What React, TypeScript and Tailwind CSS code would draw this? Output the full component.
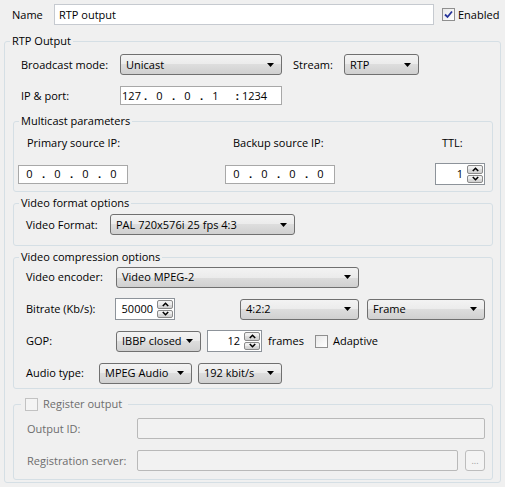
import React from 'react';

const comboBg = 'bg-[linear-gradient(#f3f3f3,#ebebeb_50%,#dddddd_50%,#d0d0d0)]';

function Arrow() {
  return (
    <svg width="7" height="4" viewBox="0 0 7 4" className="shrink-0">
      <path d="M0 0 L7 0 L3.5 4 Z" fill="#000" />
    </svg>
  );
}

function Combo({ w, children }: { w: string; children: React.ReactNode }) {
  return (
    <div className={`${w} h-[21px] shrink-0 flex items-center justify-between pl-[5px] pr-[7px] border border-[#707070] rounded-[3px] ${comboBg}`}>
      <span className="whitespace-nowrap">{children}</span>
      <Arrow />
    </div>
  );
}

function SpinBtn({ up }: { up?: boolean }) {
  return (
    <div className={`flex-1 flex items-center justify-center border border-[#8a8a8a] rounded-[2px] ${comboBg}`}>
      <svg width="7" height="5" viewBox="0 0 7 5">
        <path d={up ? 'M0.8 4 L3.5 1.3 L6.2 4' : 'M0.8 1 L3.5 3.7 L6.2 1'} stroke="#000" strokeWidth="1.6" fill="none" />
      </svg>
    </div>
  );
}

function Spin({ w, value }: { w: string; value: string }) {
  return (
    <div className={`${w} h-[22px] shrink-0 flex border border-[#8d939a] bg-white`}>
      <div className="flex-1 flex items-center justify-end pr-[3px]">{value}</div>
      <div className="w-[18px] flex flex-col gap-[1px] p-[1px]">
        <SpinBtn up />
        <SpinBtn />
      </div>
    </div>
  );
}

function Ip({ parts, port }: { parts: string[]; port?: string }) {
  return (
    <div className="w-full h-[19px] flex items-center border border-[#a8a8a8] bg-white">
      {parts.map((p, i) => (
        <React.Fragment key={i}>
          <span className="w-[21px] text-center">{p}</span>
          {i < 3 && <span className="w-[7px] text-center font-bold">.</span>}
        </React.Fragment>
      ))}
      {port && (
        <>
          <span className="w-[13px] text-right font-bold">:</span>
          <span className="pl-[3px]">{port}</span>
        </>
      )}
    </div>
  );
}

function Check({ checked, disabled }: { checked?: boolean; disabled?: boolean }) {
  return (
    <div
      className={`w-[13px] h-[13px] shrink-0 flex items-center justify-center border ${
        disabled ? 'border-[#c2c2c2] bg-[#f4f4f4]' : 'border-[#8f8f8f] bg-[linear-gradient(135deg,#e8e8e8,#ffffff)]'
      }`}
    >
      {checked && (
        <svg width="9" height="9" viewBox="0 0 9 9">
          <path d="M1 4.5 L3.5 7 L8 1.5" stroke="#26349a" strokeWidth="1.8" fill="none" />
        </svg>
      )}
    </div>
  );
}

export default function App() {
  return (
    <div className="w-[505px] h-[487px] overflow-hidden bg-[#f0f0f0] text-black text-[11px] leading-[16px] font-['Open_Sans',sans-serif]">
      {/* Name row */}
      <div className="flex items-center pt-[4px] pl-[12px]">
        <span className="w-[42px]">Name</span>
        <div className="w-[380px] h-[21px] flex items-center pl-[4px] border border-[#c6cad0] bg-white">RTP output</div>
        <div className="ml-[8px]">
          <Check checked />
        </div>
        <span className="ml-[3px]">Enabled</span>
      </div>

      <fieldset className="mt-[8px] mx-[4px] border border-[#d5dfe5] rounded-[3px]">
        <legend className="ml-[5px] px-[2px]">RTP Output</legend>

        <div className="pt-[5px] pl-[16px]">
          <div className="flex items-center h-[21px]">
            <span className="w-[99px]">Broadcast mode:</span>
            <Combo w="w-[162px]">Unicast</Combo>
            <span className="ml-[11px] w-[51px]">Stream:</span>
            <Combo w="w-[75px]">RTP</Combo>
          </div>
          <div className="flex items-center h-[19px] mt-[11px]">
            <span className="w-[99px]">IP &amp; port:</span>
            <div className="w-[162px]">
              <Ip parts={['127', '0', '0', '1']} port="1234" />
            </div>
          </div>
        </div>

        <div className="pl-[8px] pr-[7px] pb-[2px]">
          {/* Multicast parameters */}
          <fieldset className="mt-[8px] border border-[#d5dfe5] rounded-[3px]">
            <legend className="ml-[5px] px-[2px]">Multicast parameters</legend>
            <div className="flex pt-[6px] pl-[4px] pb-[6px]">
              <div className="w-[207px]">
                <div className="pl-[9px]">Primary source IP:</div>
                <div className="mt-[12px] h-[22px] flex items-center w-[110px]">
                  <Ip parts={['0', '0', '0', '0']} />
                </div>
              </div>
              <div className="w-[210px]">
                <div className="pl-[8px]">Backup source IP:</div>
                <div className="mt-[12px] h-[22px] flex items-center w-[110px]">
                  <Ip parts={['0', '0', '0', '0']} />
                </div>
              </div>
              <div>
                <div className="pl-[7px]">TTL:</div>
                <div className="mt-[12px]">
                  <Spin w="w-[50px]" value="1" />
                </div>
              </div>
            </div>
          </fieldset>

          {/* Video format */}
          <fieldset className="mt-[3px] border border-[#d5dfe5] rounded-[3px]">
            <legend className="ml-[5px] px-[2px]">Video format options</legend>
            <div className="pt-[3px] pl-[12px] pb-[10px]">
              <div className="flex items-center h-[21px]">
                <span className="w-[84px]">Video Format:</span>
                <Combo w="w-[185px]">PAL 720x576i 25 fps 4:3</Combo>
              </div>
            </div>
          </fieldset>

          {/* Video compression */}
          <fieldset className="mt-[3px] border border-[#d5dfe5] rounded-[3px]">
            <legend className="ml-[5px] px-[2px]">Video compression options</legend>
            <div className="pt-[1px] pl-[12px] pb-[4px] flex flex-col gap-[10px]">
              <div className="flex items-center h-[22px]">
                <span className="w-[90px]">Video encoder:</span>
                <Combo w="w-[243px]">Video MPEG-2</Combo>
              </div>
              <div className="flex items-center h-[22px]">
                <span className="w-[89px]">Bitrate (Kb/s):</span>
                <Spin w="w-[60px]" value="50000" />
                <div className="ml-[65px]">
                  <Combo w="w-[119px]">4:2:2</Combo>
                </div>
                <div className="ml-[8px]">
                  <Combo w="w-[118px]">Frame</Combo>
                </div>
              </div>
              <div className="flex items-center h-[22px]">
                <span className="w-[90px]">GOP:</span>
                <Combo w="w-[85px]">IBBP closed</Combo>
                <div className="ml-[6px]">
                  <Spin w="w-[55px]" value="12" />
                </div>
                <span className="ml-[6px] w-[47px]">frames</span>
                <Check />
                <span className="ml-[5px]">Adaptive</span>
              </div>
              <div className="flex items-center h-[22px]">
                <span className="w-[73px]">Audio type:</span>
                <Combo w="w-[93px]">MPEG Audio</Combo>
                <div className="ml-[6px]">
                  <Combo w="w-[84px]">192 kbit/s</Combo>
                </div>
              </div>
            </div>
          </fieldset>

          {/* Register output */}
          <fieldset className="mt-[7px] border border-[#d5dfe5] rounded-[3px] text-[#6d6d6d]">
            <legend className="ml-[7px] pl-[4px] pr-[6px]">
              <div className="flex items-center h-[16px]">
                <Check disabled />
                <span className="ml-[5px]">Register output</span>
              </div>
            </legend>
            <div className="pt-[6px] pl-[13px] pb-[8px]">
              <div className="flex items-center h-[21px]">
                <span className="w-[110px]">Output ID:</span>
                <div className="w-[348px] h-[21px] border border-[#b9b9b9] rounded-[2px] bg-[#f2f2f2]" />
              </div>
              <div className="flex items-center h-[21px] mt-[11px]">
                <span className="w-[110px]">Registration server:</span>
                <div className="w-[321px] h-[21px] border border-[#b9b9b9] rounded-[2px] bg-[#f2f2f2]" />
                <div className="ml-[7px] w-[20px] h-[21px] flex items-center justify-center border border-[#bdbdbd] rounded-[3px] bg-[#f4f4f4] text-[9px] text-[#9a9a9a] leading-none">
                  ...
                </div>
              </div>
            </div>
          </fieldset>
        </div>
      </fieldset>
    </div>
  );
}
